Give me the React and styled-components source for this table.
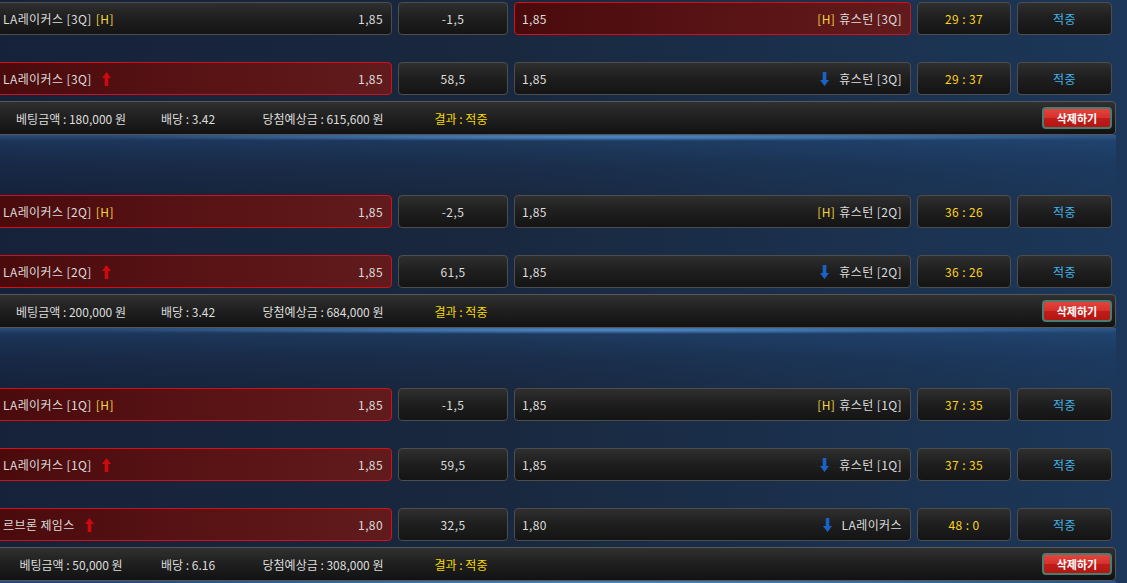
import React from "react"
import styled, { createGlobalStyle } from 'styled-components'

// ---- Data ----

const groups = [
    {
        rows: [
            { home: 'LA레이커스 [3Q]', homeTag: 'H', homeOdds: '1,85', line: '-1,5', awayOdds: '1,85', away: '휴스턴 [3Q]', awayTag: 'H', pick: 'away', score: '29 : 37' },
            { home: 'LA레이커스 [3Q]', homeArrow: true, homeOdds: '1,85', line: '58,5', awayOdds: '1,85', away: '휴스턴 [3Q]', awayArrow: true, pick: 'home', score: '29 : 37' },
        ],
        amount: '180,000', rate: '3.42', win: '615,600',
    },
    {
        rows: [
            { home: 'LA레이커스 [2Q]', homeTag: 'H', homeOdds: '1,85', line: '-2,5', awayOdds: '1,85', away: '휴스턴 [2Q]', awayTag: 'H', pick: 'home', score: '36 : 26' },
            { home: 'LA레이커스 [2Q]', homeArrow: true, homeOdds: '1,85', line: '61,5', awayOdds: '1,85', away: '휴스턴 [2Q]', awayArrow: true, pick: 'home', score: '36 : 26' },
        ],
        amount: '200,000', rate: '3.42', win: '684,000',
    },
    {
        rows: [
            { home: 'LA레이커스 [1Q]', homeTag: 'H', homeOdds: '1,85', line: '-1,5', awayOdds: '1,85', away: '휴스턴 [1Q]', awayTag: 'H', pick: 'home', score: '37 : 35' },
            { home: 'LA레이커스 [1Q]', homeArrow: true, homeOdds: '1,85', line: '59,5', awayOdds: '1,85', away: '휴스턴 [1Q]', awayArrow: true, pick: 'home', score: '37 : 35' },
            { home: '르브론 제임스', homeArrow: true, homeOdds: '1,80', line: '32,5', awayOdds: '1,80', away: 'LA레이커스', awayArrow: true, pick: 'home', score: '48 : 0' },
        ],
        amount: '50,000', rate: '6.16', win: '308,000',
    },
]

// ---- Styles ----

const GlobalStyle = createGlobalStyle`
body {
    margin: 0;
    background: linear-gradient(90deg, #16223a 0%, #19283f 45%, #1b3250 80%, #1c3759 100%);
    font-family: "Noto Sans CJK KR", "Noto Sans", sans-serif;
    overflow: hidden;
}
`;
const Page = styled.div`
width: 1124px;
margin-left: -8px;
padding-top: 2px;
`;
const Group = styled.section`
display: flex;
flex-direction: column;
gap: 27px;
padding-bottom: 60px;
background:
    radial-gradient(ellipse 45% 4px at 55% 2px, rgba(90, 160, 230, 0.75), transparent) bottom / 100% 60px no-repeat,
    linear-gradient(180deg, rgba(70, 130, 200, 0.45) 0px, rgba(40, 95, 160, 0.3) 6px, rgba(30, 70, 125, 0.18) 30px, transparent 60px) bottom / 100% 60px no-repeat;
`;
const Row = styled.div`
display: grid;
grid-template-columns: 400px 110px 397px 94px 95px;
column-gap: 6px;
height: 33px;
`;
const Box = styled.div`
display: flex;
align-items: center;
justify-content: ${p => p.align || 'center'};
box-sizing: border-box;
height: 33px;
padding: 0 8px 0 ${p => p.padLeft || 8}px;
border-radius: 4px;
border: 1px solid ${p => p.active ? '#d0101a' : '#4d4d4d'};
background: ${p => p.active
    ? 'linear-gradient(90deg, #4a0a0c 0%, #5a1416 60%, #621b1c 100%)'
    : 'linear-gradient(180deg, #2f2f2f 0%, #1e1e1e 50%, #141414 100%)'};
color: ${p => p.color || '#dcdcdc'};
font-size: 12px;
letter-spacing: 0.4px;
white-space: nowrap;
`;
const Team = styled.span`
display: flex;
align-items: center;
gap: 4px;
margin-right: auto;
`;
const TeamRight = styled(Team)`
margin-right: 0;
margin-left: auto;
`;
const Tag = styled.span`
color: #f2d640;
`;
const ArrowWrap = styled.span`
display: flex;
margin: 0 ${p => p.down ? '6px 0 0' : '0 0 6px'};
`;
const Summary = styled.div`
display: flex;
align-items: center;
box-sizing: border-box;
height: 34px;
margin-top: -21px;
padding-right: 3px;
border: 1px solid #575757;
border-radius: 4px;
background: linear-gradient(180deg, #303030 0%, #1f1f1f 50%, #121212 100%);
color: #dcdcdc;
font-size: 12px;
`;
const Cell = styled.span`
width: ${p => p.width}px;
text-align: center;
color: ${p => p.color || '#dcdcdc'};
white-space: nowrap;
`;
const DeleteButton = styled.button`
margin-left: auto;
width: 70px;
height: 22px;
padding: 0;
border: 2px solid #4a7d70;
border-radius: 4px;
background: linear-gradient(180deg, #e4443d 0%, #d5302b 50%, #bf1d19 51%, #b51612 100%);
color: #fff;
font-family: "Noto Sans CJK KR", sans-serif;
font-size: 11px;
font-weight: 700;
cursor: pointer;
`;

// ---- Icons ----

const Arrow = ({ down }) => (
    <ArrowWrap down={down}>
        <svg width="9" height="14" viewBox="0 0 9 14" style={{ transform: down ? 'rotate(180deg)' : 'none' }}>
            <path d="M4.5 0 L9 6 L6.3 6 L6.3 14 L2.7 14 L2.7 6 L0 6 Z" fill={down ? '#1a62c8' : '#cc0a10'} />
        </svg>
    </ArrowWrap>
)

const BetRow = ({ r }) => (
    <Row>
        <Box align="space-between" padLeft={10} active={r.pick === 'home'}>
            <Team>
                <span>{r.home}</span>
                {r.homeTag && <Tag>[{r.homeTag}]</Tag>}
                {r.homeArrow && <Arrow />}
            </Team>
            <span>{r.homeOdds}</span>
        </Box>
        <Box>{r.line}</Box>
        <Box align="space-between" padLeft={7} active={r.pick === 'away'}>
            <span>{r.awayOdds}</span>
            <TeamRight>
                {r.awayTag && <Tag>[{r.awayTag}]</Tag>}
                {r.awayArrow && <Arrow down />}
                <span>{r.away}</span>
            </TeamRight>
        </Box>
        <Box color="#ffd21a">{r.score}</Box>
        <Box color="#3fb2ea">적중</Box>
    </Row>
)

const App = () => (
    <>
        <GlobalStyle />
        <Page>
            {groups.map((g, i) => (
                <Group key={i}>
                    {g.rows.map((r, j) => <BetRow key={j} r={r} />)}
                    <Summary>
                        <Cell width={156}>베팅금액 : {g.amount} 원</Cell>
                        <Cell width={78}>배당 : {g.rate}</Cell>
                        <Cell width={192}>당첨예상금 : {g.win} 원</Cell>
                        <Cell width={84} color="#f6d800">결과 : 적중</Cell>
                        <DeleteButton>삭제하기</DeleteButton>
                    </Summary>
                </Group>
            ))}
        </Page>
    </>
)

export default App;
